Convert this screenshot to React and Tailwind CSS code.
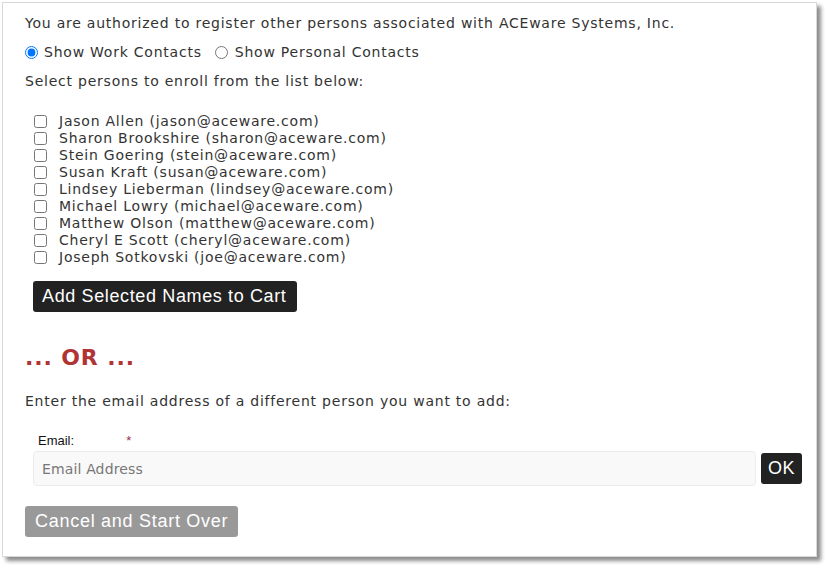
const contacts = [
  ['Jason Allen', 'jason@aceware.com'],
  ['Sharon Brookshire', 'sharon@aceware.com'],
  ['Stein Goering', 'stein@aceware.com'],
  ['Susan Kraft', 'susan@aceware.com'],
  ['Lindsey Lieberman', 'lindsey@aceware.com'],
  ['Michael Lowry', 'michael@aceware.com'],
  ['Matthew Olson', 'matthew@aceware.com'],
  ['Cheryl E Scott', 'cheryl@aceware.com'],
  ['Joseph Sotkovski', 'joe@aceware.com'],
]

export default function App() {
  return (
    <div className="w-[825px] h-[565px] bg-white pt-[2px] pl-[2px]">
      <div className="w-[815px] h-[555px] bg-white border border-[#d8d8d8] shadow-[4px_4px_4px_rgba(0,0,0,0.45)] px-[22px] pt-[10px] text-[14px] leading-[17px] text-[#333] tracking-[0.055em] font-['DejaVu_Sans',Verdana,sans-serif]">
        <p className="py-[2px]">You are authorized to register other persons associated with ACEware Systems, Inc.</p>

        <div className="mt-[10px] flex items-center">
          <label className="flex items-center">
            <input type="radio" name="kind" defaultChecked className="m-0 w-[13px] h-[13px] accent-[#0075ff]" />
            <span className="ml-[6px]">Show Work Contacts</span>
          </label>
          <label className="flex items-center ml-[13px]">
            <input type="radio" name="kind" className="m-0 w-[13px] h-[13px]" />
            <span className="ml-[7px]">Show Personal Contacts</span>
          </label>
        </div>

        <p className="mt-[12px]">Select persons to enroll from the list below:</p>

        <ul className="mt-[23px] pl-[9px]">
          {contacts.map(([name, email]) => (
            <li key={email} className="flex items-center h-[17px]">
              <input type="checkbox" className="m-0 w-[13px] h-[13px]" />
              <span className="ml-[12px]">{name} ({email})</span>
            </li>
          ))}
        </ul>

        <button className="mt-[15px] ml-[8px] h-[31px] pl-[9px] pr-[10px] rounded-[3px] bg-[#222] text-white text-[18px] tracking-[0.035em] font-['Liberation_Sans',Arial,sans-serif]">
          Add Selected Names to Cart
        </button>

        <h2 className="mt-[32px] text-[22px] leading-[28px] font-bold text-[#b03434] tracking-[0.04em]">... OR ...</h2>

        <p className="mt-[21px]">Enter the email address of a different person you want to add:</p>

        <div className="mt-[24px] ml-[13px] flex items-start text-[13px] leading-[14px] tracking-normal font-['Liberation_Sans',Arial,sans-serif] text-[#111]">
          <span>Email:</span>
          <span className="ml-[52px] text-[#a03050]">*</span>
        </div>

        <div className="mt-[3px] ml-[8px] flex items-center gap-[5px]">
          <input
            type="text"
            placeholder="Email Address"
            className="shrink-0 w-[723px] h-[35px] px-[8px] rounded-[4px] bg-[#f9f9f9] border border-[#ececec] text-[14px] tracking-[0.01em] placeholder:text-[#777] outline-none"
          />
          <button className="shrink-0 w-[41px] h-[31px] rounded-[3px] bg-[#222] text-white text-[18px] tracking-[0.03em] font-['Liberation_Sans',Arial,sans-serif]">
            OK
          </button>
        </div>

        <button className="mt-[20px] h-[31px] px-[10px] rounded-[3px] bg-[#999] text-white text-[18px] tracking-[0.04em] font-['Liberation_Sans',Arial,sans-serif]">
          Cancel and Start Over
        </button>
      </div>
    </div>
  )
}
